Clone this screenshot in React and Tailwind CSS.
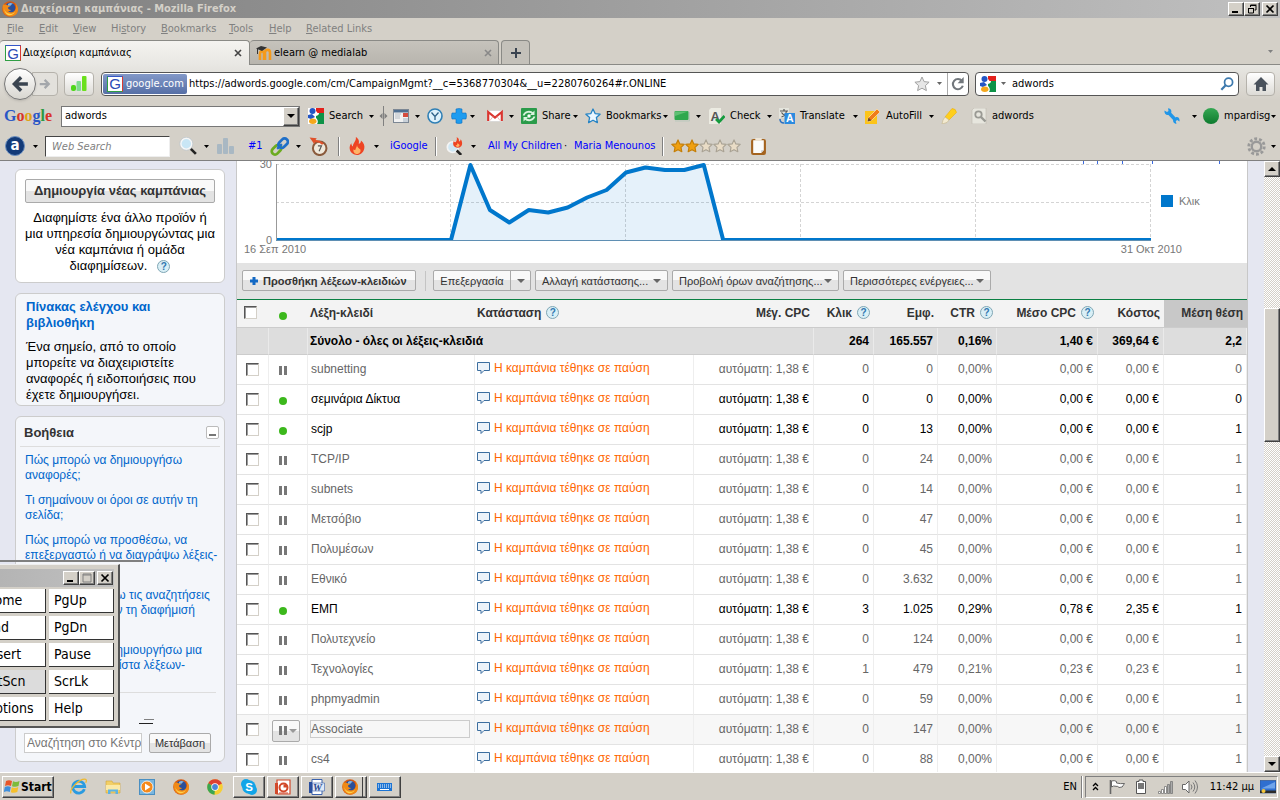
import React from "react";

const CLICKS = [
    0, 0, 0, 0, 0, 0, 0, 0, 0, 0, 30, 12, 7, 12, 11, 13, 17, 20, 27, 29, 28, 28, 30,
    0, 0, 0, 0, 0, 0, 0, 0, 0, 0, 0, 0, 0, 0, 0, 0, 0, 0, 0, 0, 0, 0, 0,
];

const ROWS = [
    { keyword: "subnetting", clicks: "0", impr: "0", ctr: "0,00%", cpc: "0,00 €", cost: "0,00 €", pos: "0" },
    { keyword: "σεμινάρια Δίκτυα", active: true, clicks: "0", impr: "0", ctr: "0,00%", cpc: "0,00 €", cost: "0,00 €", pos: "0" },
    { keyword: "scjp", active: true, clicks: "0", impr: "13", ctr: "0,00%", cpc: "0,00 €", cost: "0,00 €", pos: "1" },
    { keyword: "TCP/IP", clicks: "0", impr: "24", ctr: "0,00%", cpc: "0,00 €", cost: "0,00 €", pos: "1" },
    { keyword: "subnets", clicks: "0", impr: "14", ctr: "0,00%", cpc: "0,00 €", cost: "0,00 €", pos: "1" },
    { keyword: "Μετσόβιο", clicks: "0", impr: "47", ctr: "0,00%", cpc: "0,00 €", cost: "0,00 €", pos: "1" },
    { keyword: "Πολυμέσων", clicks: "0", impr: "45", ctr: "0,00%", cpc: "0,00 €", cost: "0,00 €", pos: "1" },
    { keyword: "Εθνικό", clicks: "0", impr: "3.632", ctr: "0,00%", cpc: "0,00 €", cost: "0,00 €", pos: "1" },
    { keyword: "ΕΜΠ", active: true, clicks: "3", impr: "1.025", ctr: "0,29%", cpc: "0,78 €", cost: "2,35 €", pos: "1" },
    { keyword: "Πολυτεχνείο", clicks: "0", impr: "124", ctr: "0,00%", cpc: "0,00 €", cost: "0,00 €", pos: "1" },
    { keyword: "Τεχνολογίες", clicks: "1", impr: "479", ctr: "0,21%", cpc: "0,23 €", cost: "0,23 €", pos: "1" },
    { keyword: "phpmyadmin", clicks: "0", impr: "59", ctr: "0,00%", cpc: "0,00 €", cost: "0,00 €", pos: "1" },
    { keyword: "Associate", hover: true, clicks: "0", impr: "147", ctr: "0,00%", cpc: "0,00 €", cost: "0,00 €", pos: "1" },
    { keyword: "cs4", clicks: "0", impr: "88", ctr: "0,00%", cpc: "0,00 €", cost: "0,00 €", pos: "1" },
];

const HELP_LINKS = [
    "Πώς μπορώ να δημιουργήσω αναφορές;",
    "Τι σημαίνουν οι όροι σε αυτήν τη σελίδα;",
    "Πώς μπορώ να προσθέσω, να επεξεργαστώ ή να διαγράψω λέξεις-κλειδιά;",
    "Πώς μπορώ να δω τις αναζητήσεις που ενεργοποιούν τη διαφήμισή μου;",
    "Πώς μπορώ να δημιουργήσω μια αποτελεσματική λίστα λέξεων-κλειδιά;",
];

const RAISED =
    "bg-[#d4d0c8] border border-t-white border-l-white border-r-[#404040] border-b-[#404040] shadow-[inset_-1px_-1px_0_#808080]";
const SUNKEN = "border border-t-[#808080] border-l-[#808080] border-r-white border-b-white";
const GBUTTON =
    "border border-[#aaa] rounded-xs bg-[linear-gradient(#f9f9f9_50%,#e3e3e3_50%)] text-[#333] whitespace-nowrap";

/* ---------- small pieces ---------- */

const Svg = ({ size = 16, className = "", children }) => (
    <svg width={size} height={size} viewBox="0 0 16 16" fill="none" className={`shrink-0 ${className}`} aria-hidden="true">
        {children}
    </svg>
);

const Caret = ({ className = "", color = "#000" }) => (
    <svg width="5" height="3" viewBox="0 0 5 3" className={`shrink-0 ${className}`} aria-hidden="true">
        <path d="M0 0h5L2.500 3z" fill={color} />
    </svg>
);

const BigCaret = ({ color = "#666", className = "" }) => (
    <svg width="8" height="4" viewBox="0 0 8 4" className={`shrink-0 ${className}`} aria-hidden="true">
        <path d="M0 0h8L4 4z" fill={color} />
    </svg>
);

const Divider = ({ className = "" }) => (
    <div className={`w-0.5 h-[19px] shrink-0 border-l border-[#808080] bg-white ${className}`} />
);

const Help = ({ className = "" }) => (
    <button
        aria-label="Βοήθεια"
        className={`inline-flex items-center justify-center size-[13px] rounded-full border border-[#7fa6b4] bg-[#d9eff6] text-[#3178b0] text-[10px] leading-none font-bold shrink-0 ${className}`}
    >
        ?
    </button>
);

const Check = ({ label }) => (
    <input
        type="checkbox"
        aria-label={label}
        className="block appearance-none size-[13px] bg-white border border-t-[#555] border-l-[#555] border-r-[#d4d0c8] border-b-[#d4d0c8] shadow-[inset_1px_1px_0_#999]"
    />
);

const Tool = ({ icon, label, caret, className = "" }) => (
    <button aria-label={label || "Εργαλείο"} className={`flex items-center h-6 shrink-0 whitespace-nowrap ${className}`}>
        {icon}
        {label && <span className="ml-[5px]">{label}</span>}
        {caret && <Caret className="ml-auto" />}
    </button>
);

/* ---------- icons ---------- */

const FirefoxIcon = ({ size = 16 }) => (
    <Svg size={size}>
        <circle cx="8" cy="8" r="7.800" fill="#d9580f" />
        <circle cx="8" cy="7" r="5.400" fill="#2b4f9a" />
        <path d="M6 3c2-1.500 4-1 5 0-1 0-2 .5-2 1.500L6 5z" fill="#7fb4e6" />
        <path d="M1 3.500C0 8 1 12 4 14s8 2 10.500-1S16.500 5 13 2c1.500 3 1.500 6-.5 8s-5 1.500-6.500 0c1.500.3 2.500-.3 3-1-2-.3-3-1-3-2.500L8.500 5C6.500 5 5.500 4.200 4 3.500 3 3.500 2 4 1 3.500z" fill="#f08a17" />
        <path d="M2 6c0 4 2.500 6.500 6 6.800 2 .2 4-.8 5-2.300-1 3-3.500 4-6 3.700S2 11 2 6z" fill="#ffd24a" />
    </Svg>
);

const GoogleG = () => (
    <span className="flex items-center justify-center size-4 shrink-0 bg-white border border-t-[#3456c8] border-l-[#2f9e44] border-r-[#d93a32] border-b-[#2f9e44] text-[#2a4bb5] text-[15px] leading-none font-['Liberation_Sans',sans-serif]">
        G
    </span>
);

const GoogleSquare = () => (
    <Svg>
        <path d="M0 0h16v16H0z" fill="#fff" />
        <path d="M8 0h8v5H9.500A4 4 0 0 0 8 3z" fill="#e3211c" />
        <path d="M8 8c2-.5 3-1.500 3-3h5v11H9c1-1 1.500-4-1-6z" fill="#0d9247" />
        <circle cx="4.500" cy="3" r="3" fill="#2456c4" />
        <path d="M0 7l4-1 3 3-4 2-3-1z" fill="#2456c4" />
        <ellipse cx="4.800" cy="13.300" rx="3.700" ry="2.700" fill="#f5a81c" />
    </Svg>
);

const MoodleIcon = () => (
    <Svg>
        <path d="M4 15V9c0-3.500 4-3.500 4 0v6M9 15V7.500c0-3.500 5-3.500 5 0V15" stroke="#f59a1b" strokeWidth="2.600" />
        <path d="M0 3.500L5 1l6 1.500-5 3.500z" fill="#333" />
        <path d="M1.500 4v5" stroke="#333" />
    </Svg>
);

const WindowIcon = () => (
    <Svg>
        <rect x=".5" y="1.500" width="15" height="13" fill="#f1f1f1" stroke="#7c8794" />
        <path d="M1 2h14v2.500H1z" fill="#4f6f92" />
        <path d="M2 6h6M2 8h5M2 10h5" stroke="#b5bcc4" />
        <path d="M10 5h5v4h-5z" fill="#d44b3e" />
        <path d="M10 10h5v4h-5z" fill="#c9d1d9" />
    </Svg>
);

const ClockIcon = () => (
    <Svg>
        <circle cx="8" cy="8" r="7" fill="#dff1fb" stroke="#2f7fb5" strokeWidth="1.600" />
        <path d="M4.500 4.500L8 8.500l3.500-4M8 8.500V12" stroke="#2c5f86" strokeWidth="1.300" />
    </Svg>
);

const PlusIcon = () => (
    <Svg>
        <path d="M5 1q3-1 6 0v4h4q1 3 0 6h-4v4q-3 1-6 0v-4H1q-1-3 0-6h4z" fill="#1e9cf0" stroke="#0f6fc0" strokeWidth=".6" />
    </Svg>
);

const GmailIcon = () => (
    <Svg>
        <rect y="2.500" width="16" height="11" rx="1" fill="#fff" stroke="#c9c9c9" strokeWidth=".5" />
        <path d="M1.200 13V4L8 9.500 14.800 4v9" stroke="#d93630" strokeWidth="2.200" />
        <path d="M3 12.500l3-4M13 12.500l-3-4" stroke="#e9a8a5" strokeWidth=".8" />
    </Svg>
);

const ShareIcon = () => (
    <Svg>
        <rect width="16" height="16" rx="1" fill="#2a9b4a" />
        <path d="M2.500 7.500C4 3.500 9 2.500 12 5.500M13.500 8.500c-1.500 4-6.500 5-9.500 2" stroke="#d9f3df" strokeWidth="1.800" />
        <path d="M13.500 2.500v4.500H9zM2.500 13.500V9H7z" fill="#d9f3df" />
        <circle cx="8" cy="8" r="1.700" fill="#fff" />
    </Svg>
);

const Star = ({ size = 16, fill = "#eaf6ff", stroke = "#2583c4", width = 1.3 }) => (
    <Svg size={size}>
        <path d="M8 1l2.100 4.600 5 .6-3.700 3.400 1 5L8 12.200l-4.400 2.400 1-5L.9 6.200l5-.6z" fill={fill} stroke={stroke} strokeWidth={width} strokeLinejoin="round" />
    </Svg>
);

const GreenBar = () => (
    <Svg>
        <rect x=".5" y="3" width="14" height="9" rx="1" fill="#2fa84e" />
        <path d="M1 3.500h13L1 8z" fill="#5fc074" />
        <path d="M1 13h14.500V4" stroke="#b9c7bb" />
    </Svg>
);

const SpellIcon = () => (
    <Svg>
        <path d="M0 2l2-2h10v16H0z" fill="#ecebe2" />
        <text x="1.500" y="12.500" fontSize="13" fontWeight="bold" fill="#555" fontFamily="Liberation Sans">A</text>
        <path d="M7 11l3 3 5.500-6" stroke="#149a3d" strokeWidth="2.600" />
    </Svg>
);

const TranslateIcon = () => (
    <Svg>
        <rect width="10" height="10" fill="#e4e4dc" />
        <path d="M1 3h8M5 1v2M2.500 9c3-1 4.500-3 5-6M2.500 4.500C4 7 6 8 8 8.500" stroke="#555" strokeWidth="1.200" />
        <rect x="5.500" y="5" width="10.500" height="11" fill="#2c8be0" />
        <text x="7" y="14.300" fontSize="10.500" fontWeight="bold" fill="#fff" fontFamily="Liberation Sans">A</text>
        <path d="M1 11c0 3 1.500 4 4 4" stroke="#2c6fc0" strokeWidth="1.500" />
    </Svg>
);

const AutoFillIcon = () => (
    <Svg>
        <path d="M0 3h12v13H0z" fill="#fcc419" />
        <path d="M2.500 13.500l1-4L12 1l3 3-8.500 8.500z" fill="#f07c1a" stroke="#fff3c9" strokeWidth=".6" />
        <path d="M2.500 13.500l1-4 3 3z" fill="#6b4c2a" />
    </Svg>
);

const MarkerIcon = () => (
    <Svg>
        <path d="M4 9l7-8.500q4 0 4.500 4L8 12z" fill="#ffcf1d" stroke="#e8a800" strokeWidth=".5" />
        <path d="M4 9l4 3-2 2.500L1 16l1-4z" fill="#f3ead0" stroke="#c4b58a" strokeWidth=".6" />
    </Svg>
);

const FindIcon = () => (
    <Svg>
        <path d="M1 2l2-2h12v16H1z" fill="#e7e6de" stroke="#bdbbb0" strokeWidth=".6" />
        <circle cx="7.500" cy="6.500" r="3.200" stroke="#9a9a94" strokeWidth="1.800" />
        <path d="M10 9l4.500 4.500" stroke="#9a9a94" strokeWidth="2.400" />
    </Svg>
);

const WrenchIcon = () => (
    <Svg>
        <path d="M4.500 4.500l7.500 8" stroke="#2196e8" strokeWidth="3.400" />
        <path d="M.5 2.500L3 4l1.500-1L4 .3C7 .5 8 3 7 5L4.500 7C2 7.500 0 5.500.5 2.500zM15.500 13.500L13.200 12l-1.500 1 .8 2.700c-3 0-4-2.500-3-4.500l2.500-2c2.500-.5 4 1.500 3.500 4.300z" fill="#2196e8" />
    </Svg>
);

const Magnifier = ({ size = 18 }) => (
    <Svg size={size}>
        <path d="M10.500 10.500l4.500 4.500" stroke="#222" strokeWidth="2.300" />
        <circle cx="6.500" cy="6" r="5" fill="#c9e6f5" stroke="#f7f7f7" strokeWidth="1.600" />
        <circle cx="6.500" cy="6" r="5.800" stroke="#b9c4cb" strokeWidth=".6" />
    </Svg>
);

const Flame = ({ size = 18 }) => (
    <Svg size={size}>
        <path d="M7 0c3 2 3 4 2.500 6 1.500-.3 2-1.500 2-3 2.500 2 3.500 4.500 3 7-.7 4-3.500 6-6.500 6s-6-2-6.500-5.500c-.3-2 .5-4 1.500-5 0 1.500.5 2.500 1.500 3C4 5.500 7.500 4 7 0z" fill="#ee4423" />
        <path d="M8 7c0 2 2 3 3 4 .7 2-.8 4-3 4s-3.800-2-3-4.200c.6.700 1 .7 1.500.7C6.500 10 8 9 8 7z" fill="#ffb366" />
    </Svg>
);

const ChainIcon = () => (
    <Svg size={19}>
        <rect x="1" y="8" width="9" height="5.500" rx="2.700" transform="rotate(-45 5.500 10.800)" stroke="#6cab1f" strokeWidth="2.300" />
        <rect x="6.500" y="2.500" width="9" height="5.500" rx="2.700" transform="rotate(-45 11 5.200)" stroke="#1e6fc9" strokeWidth="2.300" />
        <path d="M6 10l4-4" stroke="#1e6fc9" strokeWidth="2" />
    </Svg>
);

const Wayback = () => (
    <Svg size={19}>
        <circle cx="9" cy="9.500" r="5.700" fill="#efe9dc" stroke="#8a5a3c" strokeWidth="1.700" />
        <path d="M7.500 7.500h3L8.500 12" stroke="#555" />
        <path d="M.5.5l6 .5-1 1.500c3 0 5 1 7 3l-1.500 1C9 4.500 7 4 5 4.500L4.500 6z" fill="#e0512a" />
    </Svg>
);

const Gear = () => (
    <Svg size={19}>
        <circle cx="8" cy="8" r="6.500" stroke="#999" strokeWidth="2.400" strokeDasharray="2.400 1.680" />
        <circle cx="8" cy="8" r="4" fill="#d4d0c8" stroke="#999" strokeWidth="2" />
    </Svg>
);

const Clipboard = () => (
    <Svg size={17}>
        <rect x="1" y="1" width="14" height="15" rx="2" fill="#a4631f" />
        <path d="M3 2h10v9.500L10.500 14H3z" fill="#fbfbfb" />
        <path d="M13 11.500h-2.500V14z" fill="#c9c9c9" />
        <path d="M5 0h6v2.500H5z" fill="#eee6d8" />
    </Svg>
);

const FlameSearch = () => (
    <Svg size={18}>
        <circle cx="6" cy="9" r="4.800" fill="#cfe8f5" stroke="#f4f4f4" strokeWidth="1.500" />
        <path d="M9.500 12l4 4" stroke="#222" strokeWidth="2.200" />
        <path d="M9.500 0c2.500 1.500 2 3 2 4 1-.3 1.500-1 1.500-2 2.500 3 1.500 7.500-2.500 7.500S5.500 6 7 3.500c.3.800.8 1.200 1.300 1.200C9.500 4 10 2 9.500 0z" fill="#ee4423" />
        <path d="M10.300 5c.2 1 1.700 1.200 1.700 2.400 0 2-3.300 2-3.400 0C9.500 7.200 10.300 6.500 10.300 5z" fill="#ffb366" />
    </Svg>
);

const IeIcon = () => (
    <Svg size={17}>
        <path d="M13.500 10.500A5.600 5.600 0 1 1 13.800 8H4" stroke="#2a9be0" strokeWidth="2.600" />
        <path d="M1 14.500C-1 11 8 1 14 1c2 0 1.500 2 .8 3.500" stroke="#efb92d" strokeWidth="1.200" />
    </Svg>
);

const FolderIcon = () => (
    <Svg>
        <path d="M1 2h6l1 2h7v10H1z" fill="#f2cf66" stroke="#d1a53a" strokeWidth=".6" />
        <path d="M1 6h14v5H1z" fill="#fbe9a6" />
        <path d="M3 15v-4.500h10V15h-2.500v-2.500h-5V15z" fill="#5db3e3" />
    </Svg>
);

const PlayerIcon = () => (
    <Svg>
        <rect x=".5" y=".5" width="15" height="15" fill="#79b6df" stroke="#4a8fc2" />
        <circle cx="8" cy="8" r="6" fill="#f58a1c" stroke="#fff" strokeWidth=".8" />
        <path d="M6 4.500L11.500 8 6 11.500z" fill="#fff" />
    </Svg>
);

const ChromeIcon = () => (
    <Svg>
        <circle cx="8" cy="8" r="7.800" fill="#f6cf33" />
        <path d="M8 8L1.200 4.200A7.800 7.800 0 0 1 15 4.500z" fill="#dd4132" />
        <path d="M8 8L1.200 4.200A7.800 7.800 0 0 0 7.500 15.800z" fill="#3aa653" />
        <circle cx="8" cy="8" r="3.700" fill="#fff" />
        <circle cx="8" cy="8" r="2.900" fill="#4a86d8" />
    </Svg>
);

const SkypeIcon = () => (
    <Svg>
        <circle cx="5" cy="5" r="5" fill="#12a5e8" />
        <circle cx="11" cy="11" r="5" fill="#12a5e8" />
        <circle cx="8" cy="8" r="6.800" fill="#12a5e8" />
        <text x="4.200" y="12" fontSize="11.500" fontWeight="bold" fill="#fff" fontFamily="Liberation Sans">S</text>
    </Svg>
);

const PowerPointIcon = () => (
    <Svg>
        <path d="M2 1h13v14H2z" fill="#fff" stroke="#d2492a" strokeWidth="1.200" />
        <path d="M0 4h3v11H0z" fill="#d2492a" />
        <circle cx="8.500" cy="8.500" r="4" stroke="#d2492a" strokeWidth="2" />
        <path d="M8.500 8.500V5.500h3.500v3z" fill="#d2492a" />
        <path d="M4 14h9" stroke="#d2492a" />
    </Svg>
);

const WordIcon = () => (
    <Svg>
        <path d="M3 .5h10v15H3z" fill="#fff" stroke="#3b62ad" />
        <path d="M0 3h3v11H0z" fill="#2a4f9e" />
        <path d="M3.500 4h12v8h-12z" fill="#dfe8f7" stroke="#3b62ad" strokeWidth=".6" />
        <text x="4" y="11.500" fontSize="10" fontStyle="italic" fontWeight="bold" fill="#27488f" fontFamily="Liberation Serif">W</text>
    </Svg>
);

const KeyboardIcon = () => (
    <Svg>
        <rect x="0" y="4" width="15" height="8" fill="#1c74d4" />
        <path d="M1 6h13M1 8h13" stroke="#fff" strokeDasharray="1 1" />
        <path d="M3 10.500h9" stroke="#fff" />
    </Svg>
);

const WindowsFlag = () => (
    <Svg>
        <path d="M2 2q3-1.500 6 0L7 7Q4 5.500 1 7z" fill="#e8562a" />
        <path d="M9 2.300q3 1.300 6.500-.3L14.500 7q-3 1.500-6.500.2z" fill="#7dbb3b" />
        <path d="M.8 8q3-1.500 6 0l-1 5q-3-1.500-6 0z" fill="#3f8fdc" />
        <path d="M7.800 8.300q3 1.300 6.500-.3l-1 5q-3 1.500-6.500.3z" fill="#f6c02c" />
    </Svg>
);

const Bubble = () => (
    <svg width="13" height="12" viewBox="0 0 13 12" className="shrink-0" aria-hidden="true">
        <path d="M.5.500h12v8H7l-3 3V8.500H.5z" fill="#edf3f9" stroke="#3c6e9f" />
    </svg>
);

const Pause = () => (
    <svg width="8" height="9" viewBox="0 0 8 9" className="shrink-0" aria-hidden="true">
        <path d="M0 0h3v9H0zM5 0h3v9H5z" fill="#777" />
    </svg>
);

const Dot = () => <span className="block size-2 rounded-full bg-[#3cb81c]" />;

const WinGlyph = ({ kind }) => (
    <svg width="10" height="10" viewBox="0 0 10 10" aria-hidden="true">
        {kind === "min" && <path d="M1 8h6" stroke="#000" strokeWidth="2" />}
        {kind === "max" && <path d="M1 1h8v8H1zM1 2h8" stroke="#808080" fill="none" />}
        {kind === "restore" && <path d="M3.500 1h6M3.500 1.500V3M3 1.500h6V6H7.500M1 4.500h6M1.500 4v5h5V4" stroke="#000" fill="none" />}
        {kind === "close" && <path d="M1.500 1.500l7 7M8.500 1.500l-7 7" stroke="#000" strokeWidth="1.700" />}
    </svg>
);

const WinButton = ({ kind, label, className = "" }) => (
    <button aria-label={label} className={`flex items-center justify-center w-4 h-3.5 ${RAISED} ${className}`}>
        <WinGlyph kind={kind} />
    </button>
);

/* ---------- browser chrome ---------- */

const TitleBar = () => (
    <div className="flex items-center h-[18px] shrink-0 pl-0.5 pr-0.5 bg-linear-to-r from-[#808080] to-[#c0c0c0] text-[#d4d0c8] font-bold">
        <FirefoxIcon />
        <span className="ml-[3px] whitespace-nowrap">Διαχείριση καμπάνιας - Mozilla Firefox</span>
        <WinButton kind="min" label="Ελαχιστοποίηση" className="ml-auto" />
        <WinButton kind="restore" label="Επαναφορά" />
        <WinButton kind="close" label="Κλείσιμο" className="ml-0.5" />
    </div>
);

const MENU = [
    ["F", "ile", "w-8"],
    ["E", "dit", "w-[34px]"],
    ["V", "iew", "w-[38px]"],
    ["Hi", "s", "w-[50px]", "tory"],
    ["B", "ookmarks", "w-[68px]"],
    ["T", "ools", "w-10"],
    ["H", "elp", "w-[37px]"],
    ["R", "elated Links", "w-20"],
];

const MenuBar = () => (
    <div className="flex items-center h-[22px] shrink-0 pl-[7px] text-[#808080]">
        {MENU.map(([a, b, width, rest]) => (
            <button key={a + b} className={`text-left whitespace-nowrap shrink-0 ${width}`}>
                {rest ? (
                    <>
                        {a}<u>{b}</u>{rest}
                    </>
                ) : (
                    <>
                        <u>{a}</u>{b}
                    </>
                )}
            </button>
        ))}
    </div>
);

const CloseGlyph = ({ color }) => (
    <svg width="8" height="8" viewBox="0 0 8 8" aria-hidden="true">
        <path d="M1 1l6 6M7 1L1 7" stroke={color} strokeWidth="1.600" />
    </svg>
);

const Tabs = () => (
    <div className="flex items-end h-[25px] shrink-0 border-b border-[#8a8a86]">
        <div className="flex items-center gap-0.5 w-[250px] h-[25px] -mb-px pl-[5px] pr-[7px] shrink-0 rounded-t-sm border-t border-r border-[#8a8a86] bg-linear-to-b from-[#f4f3f0] to-[#e8e7e3]">
            <GoogleG />
            <span>Διαχείριση καμπάνιας</span>
            <button aria-label="Κλείσιμο καρτέλας" className="ml-auto"><CloseGlyph color="#444" /></button>
        </div>
        <div className="flex items-center gap-0.5 w-[249px] h-6 pl-[6px] pr-1.5 shrink-0 rounded-t-sm border-t border-r border-[#8a8a86] bg-linear-to-b from-[#c6c3bc] to-[#b8b5ae]">
            <MoodleIcon />
            <span>elearn @ medialab</span>
            <button aria-label="Κλείσιμο καρτέλας" className="ml-auto"><CloseGlyph color="#888" /></button>
        </div>
        <button aria-label="Νέα καρτέλα" className="flex items-center justify-center ml-0.5 w-[29px] h-6 shrink-0 rounded-t-sm border border-b-0 border-[#8a8a86] bg-[#c4c1ba]">
            <svg width="10" height="10" viewBox="0 0 10 10" aria-hidden="true">
                <path d="M5 0v10M0 5h10" stroke="#3a4450" strokeWidth="2" />
            </svg>
        </button>
        <Caret color="#808080" className="ml-auto mr-[7px] mb-[11px]" />
    </div>
);

const NavBar = () => (
    <div className="flex items-center h-[35px] shrink-0 pl-1 pr-[5px] pt-0.5 bg-linear-to-b from-[#e8e7e3] to-[#d4d0c8]">
        <button aria-label="Πίσω" className="flex items-center justify-center size-8 shrink-0 rounded-full border border-[#777] bg-linear-to-b from-white to-[#d8d6d0] shadow-sm z-10">
            <Svg size={18}>
                <path d="M9 2L3 8l6 6M3.500 8H15" stroke="#3a4450" strokeWidth="3" />
            </Svg>
        </button>
        <button aria-label="Εμπρός" className="flex items-center justify-end w-[26px] h-6 -ml-1 pr-1.5 shrink-0 rounded-r border border-[#b5b2ab] bg-[#e3e1dc]">
            <Svg size={12}>
                <path d="M7.500 2.500L13 8l-5.500 5.500M12.500 8H1" stroke="#a4a7ab" strokeWidth="3" />
            </Svg>
        </button>
        <button aria-label="Alexa" className="flex items-center justify-center w-[30px] h-6 ml-1.5 shrink-0 rounded border border-[#b5b2ab] bg-linear-to-b from-white to-[#dddbd6]">
            <Svg>
                <rect x="0" y="9" width="5" height="6" rx="2" fill="#4fd61a" />
                <rect x="5.500" y="5" width="4.500" height="10" rx="1" fill="#7fdc8f" />
                <rect x="11" y="0" width="4.500" height="15" rx="1" fill="#6be01c" />
            </Svg>
        </button>
        <div className="flex items-center flex-1 min-w-0 h-6 ml-[7px] rounded border border-[#555] bg-white">
            <div className="flex items-center gap-[3px] w-[84px] h-5 ml-px pl-1 shrink-0 rounded-xs bg-linear-to-b from-[#8298c8] to-[#566fa6] text-white">
                <GoogleG />
                <span>google.com</span>
            </div>
            <input
                aria-label="Διεύθυνση"
                defaultValue="https://adwords.google.com/cm/CampaignMgmt?__c=5368770304&__u=2280760264#r.ONLINE"
                className="flex-1 min-w-0 ml-0.5 bg-transparent outline-none"
            />
            <Star fill="#e6e6e6" stroke="#a2a2a2" width={1} />
            <Caret color="#666" className="ml-[7px]" />
            <button aria-label="Ανανέωση" className="flex items-center justify-center w-[21px] h-[22px] ml-[5px] border-l border-[#aaa]">
                <Svg size={14}>
                    <path d="M12.500 4.500A5.800 5.800 0 1 0 13.500 10" stroke="#72777c" strokeWidth="2.400" />
                    <path d="M14.500 0v7h-7z" fill="#72777c" />
                </Svg>
            </button>
        </div>
        <div className="flex items-center w-[264px] h-6 ml-1.5 pl-1 pr-1 shrink-0 rounded border border-[#555] bg-white">
            <GoogleSquare />
            <Caret color="#666" className="ml-[5px]" />
            <input aria-label="Αναζήτηση Google" defaultValue="adwords" className="flex-1 min-w-0 ml-1.5 bg-transparent outline-none" />
            <Svg size={14}>
                <path d="M1.500 14.500l5-5" stroke="#3d79ad" strokeWidth="2.600" />
                <circle cx="9.800" cy="6" r="4.600" stroke="#3d79ad" strokeWidth="2" />
            </Svg>
        </div>
        <button aria-label="Αρχική σελίδα" className="flex items-center justify-center w-[29px] h-6 ml-[7px] shrink-0 rounded border border-[#b5b2ab] bg-linear-to-b from-white to-[#dddbd6]">
            <Svg>
                <path d="M8 1l7.500 7.500H13V15H9.500v-4h-3v4H3V8.500H.5z" fill="#4a525c" />
            </Svg>
        </button>
    </div>
);

const GoogleToolbar = () => (
    <div className="flex items-center h-8 shrink-0 pr-1">
        <div className="w-[61px] pl-1 shrink-0 font-['Liberation_Serif',serif] text-[16px] leading-5 font-bold">
            <span className="text-[#2a56c6]">G</span>
            <span className="text-[#d8332a]">o</span>
            <span className="text-[#e0a214]">o</span>
            <span className="text-[#2a56c6]">g</span>
            <span className="text-[#2c9a41]">l</span>
            <span className="text-[#d8332a]">e</span>
        </div>
        <div className="flex w-[239px] h-[21px] shrink-0 bg-white border border-[#777]">
            <input aria-label="Όρος αναζήτησης" defaultValue="adwords" className="flex-1 min-w-0 pl-[3px] outline-none" />
            <button aria-label="Ιστορικό" className={`flex items-center justify-center w-4 ${RAISED}`}>
                <BigCaret color="#000" />
            </button>
        </div>
        <Tool icon={<GoogleSquare />} label="Search" caret className="ml-2 w-[66px]" />
        <svg width="9" height="20" viewBox="0 0 9 20" className="ml-[5px] shrink-0" aria-hidden="true">
            <path d="M4.500 0v20" stroke="#808080" />
            <path d="M3.500 7v6l-3-3zM5.500 7v6l3-3z" fill="#808080" />
        </svg>
        <Tool icon={<WindowIcon />} caret className="ml-[5px] w-[27px]" />
        <Tool icon={<ClockIcon />} className="ml-[7px] w-4" />
        <Tool icon={<PlusIcon />} caret className="ml-2 w-6" />
        <Tool icon={<GmailIcon />} caret className="ml-3 w-[27px]" />
        <Tool icon={<ShareIcon />} label="Share" caret className="ml-[7px] w-[57px]" />
        <Tool icon={<Star />} label="Bookmarks" caret className="ml-[7px] w-[83px]" />
        <Tool icon={<GreenBar />} caret className="ml-1.5 w-[27px]" />
        <Tool icon={<SpellIcon />} label="Check" caret className="ml-2 w-[63px]" />
        <Tool icon={<TranslateIcon />} label="Translate" caret className="ml-[7px] w-[79px]" />
        <Tool icon={<AutoFillIcon />} label="AutoFill" caret className="ml-[7px] w-[69px]" />
        <Tool icon={<MarkerIcon />} className="ml-[7px] w-4" />
        <Tool icon={<FindIcon />} label="adwords" className="ml-3.5" />
        <Tool icon={<WrenchIcon />} caret className="ml-auto w-[33px]" />
        <Tool
            icon={<span className="size-4 shrink-0 rounded-full bg-linear-to-b from-[#35a853] to-[#0b7a2e]" />}
            label="mpardisg"
            caret
            className="ml-1.5 w-[73px]"
        />
    </div>
);

const AlexaToolbar = () => (
    <div className="flex items-center h-7 shrink-0 pl-[5px] pr-1">
        <span className="flex items-center justify-center size-5 shrink-0 rounded-full bg-[#123a78] border border-[#6b8fc0] text-white font-bold text-[15px] leading-none pb-0.5">a</span>
        <Caret className="ml-2" />
        <input
            aria-label="Web Search"
            placeholder="Web Search"
            className="w-[125px] h-[21px] ml-[7px] pl-1.5 shrink-0 bg-white italic placeholder:text-[#808080] border border-t-[#444] border-l-[#444] border-r-[#eee] border-b-[#eee] outline-none"
        />
        <Tool icon={<Magnifier />} caret className="ml-[9px] w-[30px]" />
        <svg width="18" height="17" viewBox="0 0 18 17" className="ml-2 shrink-0" aria-hidden="true">
            <rect x="0" y="6" width="5" height="10" rx="1" fill="#a9b8c3" />
            <rect x="6" y="0" width="5" height="16" rx="1" fill="#a9b8c3" />
            <rect x="12" y="8" width="5" height="8" rx="1" fill="#a9b8c3" />
        </svg>
        <a href="#rank" className="ml-[13px] w-[22px] shrink-0 text-[#00f]">#1</a>
        <Tool icon={<ChainIcon />} caret className="w-[31px]" />
        <Tool icon={<Wayback />} className="ml-2 w-5" />
        <Divider className="ml-[9px]" />
        <Tool icon={<Flame />} caret className="ml-2 w-[31px]" />
        <a href="#igoogle" className="ml-[11px] w-[45px] shrink-0 text-[#00f]">iGoogle</a>
        <Divider />
        <Tool icon={<FlameSearch />} caret className="ml-[9px] w-[30px]" />
        <a href="#children" className="ml-3 w-[75px] shrink-0 whitespace-nowrap text-[#00f]">All My Children</a>
        <span className="w-[11px] shrink-0 pl-px">·</span>
        <a href="#menounos" className="w-[88px] shrink-0 whitespace-nowrap text-[#00f]">Maria Menounos</a>
        <Divider />
        <div className="flex ml-[7px] shrink-0">
            <Star size={14} fill="#f0a010" stroke="#c47e08" />
            <Star size={14} fill="#f0a010" stroke="#c47e08" />
            <Star size={14} fill="#e9dcc6" stroke="#a9a294" />
            <Star size={14} fill="#e9dcc6" stroke="#a9a294" />
            <Star size={14} fill="#e9dcc6" stroke="#a9a294" />
        </div>
        <Tool icon={<Clipboard />} className="ml-[9px]" />
        <Tool icon={<Gear />} caret className="ml-auto w-[29px]" />
    </div>
);

/* ---------- page ---------- */

const Sidebar = () => (
    <aside className="w-[236px] shrink-0 pl-[15px] pr-[11px] pt-2 text-[13px] leading-4">
        <section className="rounded-md border border-[#ccc] bg-white px-[9px] pt-[9px] pb-2 text-center">
            <button className={`w-full h-6 text-[13px] font-bold ${GBUTTON}`}>Δημιουργία νέας καμπάνιας</button>
            <p className="mt-[7px]">
                Διαφημίστε ένα άλλο προϊόν ή μια υπηρεσία δημιουργώντας μια νέα καμπάνια ή ομάδα διαφημίσεων.
                <Help className="ml-2.5 align-middle" />
            </p>
        </section>

        <section className="mt-2.5 rounded-md border border-[#ccc] bg-[#f4f6fa] pl-2.5 pr-5 pt-[5px] pb-0.5">
            <a href="#library" className="block font-bold text-[#06c]">Πίνακας ελέγχου και βιβλιοθήκη</a>
            <p className="mt-2">Ένα σημείο, από το οποίο μπορείτε να διαχειριστείτε αναφορές ή ειδοποιήσεις που έχετε δημιουργήσει.</p>
        </section>

        <section className="mt-2.5 rounded-md border border-[#ccc] bg-[#f4f6fa] px-2 pb-2 text-[12px] leading-[15px]">
            <div className="flex items-center justify-between h-[30px] -mx-1 pl-1 pt-0.5 border-b border-[#ddd]">
                <h2 className="text-[13px] font-bold text-[#333]">Βοήθεια</h2>
                <button aria-label="Σύμπτυξη" className="flex items-center justify-center size-[13px] mr-px rounded-xs border border-[#bbb] bg-white">
                    <span className="w-[7px] h-0.5 mt-1 bg-[#777]" />
                </button>
            </div>
            <ul className="mt-1.5 -mr-1 pl-px space-y-2.5 text-[#06c]">
                {HELP_LINKS.map((text) => (
                    <li key={text}>
                        <a href="#help">{text}</a>
                    </li>
                ))}
            </ul>
            <div className="mt-1 border-t border-[#ddd]" />
            <form className="flex mt-10" onSubmit={(e) => e.preventDefault()}>
                <input
                    aria-label="Αναζήτηση στο Κέντρο Βοήθειας"
                    placeholder="Αναζήτηση στο Κέντρο Βοήθειας"
                    className="w-[118px] h-5 pl-0.5 text-[12px] bg-white border border-[#ccc] placeholder:text-[#777] outline-none"
                />
                <button className={`w-[62px] h-5 ml-[7px] text-[11px] ${GBUTTON}`}>Μετάβαση</button>
            </form>
        </section>
    </aside>
);

const Chart = () => {
    const step = 875 / (CLICKS.length - 1);
    const line = CLICKS.map((v, i) => `${(i * step).toFixed(1)},${76 - v * 2.5}`).join(" ");

    return (
        <div className="relative h-[102px] shrink-0 overflow-hidden bg-white text-[11px] leading-3 text-[#777]">
            <div className="flex h-20">
                <div className="flex flex-col justify-between w-[39px] h-[88px] -mt-[3px] pr-1 text-right">
                    <span>30</span>
                    <span>0</span>
                </div>
                <svg viewBox="0 0 875 80" preserveAspectRatio="none" className="flex-1 min-w-0 h-20" aria-label="Κλικ ανά ημέρα">
                    <g stroke="#d4d4d4" strokeDasharray="3 2">
                        <path d="M0 3.500h875M0 41.500h875" vectorEffect="non-scaling-stroke" />
                        <path d="M174.500 3v76M349.500 3v76M524.500 3v76M699.500 3v76M874.500 3v76" vectorEffect="non-scaling-stroke" />
                    </g>
                    <g transform="translate(0 3)">
                        <polygon points={`0,76 ${line} 875,76`} fill="#0077cc" fillOpacity=".1" />
                        <polyline points={line} fill="none" stroke="#0077cc" strokeWidth="4" strokeLinejoin="round" vectorEffect="non-scaling-stroke" />
                    </g>
                    <path d="M.5 3v77" stroke="#999" />
                    <path d="M0 79.500h875" stroke="#5f8fb3" />
                </svg>
                <div className="flex items-center gap-1.5 w-24 pl-2.5">
                    <span className="size-3 bg-[#0077cc]" />
                    <span>Κλικ</span>
                </div>
            </div>
            <div className="flex justify-between pl-[7px] pr-[65px] pt-0.5">
                <span>16 Σεπ 2010</span>
                <span>31 Οκτ 2010</span>
            </div>
            <svg width="164" height="3" viewBox="0 0 164 3" className="absolute right-0 top-0" aria-hidden="true">
                <path d="M.5 0v3M14.500 0v3M39.500 0v3M69.500 0v3M136.500 0v3" stroke="#3c6be0" />
            </svg>
        </div>
    );
};

const ActionButton = ({ label, className = "" }) => (
    <button className={`flex items-center justify-between h-[21px] pl-1.5 pr-1.5 shrink-0 ${GBUTTON} ${className}`}>
        <span>{label}</span>
        <BigCaret />
    </button>
);

const Actions = () => (
    <div className="flex items-center h-[37px] shrink-0 pl-[5px] pb-px overflow-hidden bg-[#e3e3e3] border-b border-[#0b8043] text-[11px]">
        <button className={`flex items-center gap-1 w-[174px] h-[21px] pl-1.5 shrink-0 font-bold ${GBUTTON}`}>
            <svg width="10" height="10" viewBox="0 0 10 10" aria-hidden="true">
                <path d="M5 1v8M1 5h8" stroke="#1369c4" strokeWidth="3" />
            </svg>
            Προσθήκη λέξεων-κλειδιών
        </button>
        <div className="w-px h-5 ml-[9px] mr-[7px] bg-[#c4c4c4]" />
        <div className={`flex w-[98px] h-[21px] shrink-0 ${GBUTTON}`}>
            <button className="flex-1">Επεξεργασία</button>
            <button aria-label="Επιλογές επεξεργασίας" className="flex items-center justify-center w-5 border-l border-[#aaa]">
                <BigCaret />
            </button>
        </div>
        <ActionButton label="Αλλαγή κατάστασης..." className="ml-1 w-[133px]" />
        <ActionButton label="Προβολή όρων αναζήτησης..." className="ml-1 w-[167px]" />
        <ActionButton label="Περισσότερες ενέργειες..." className="ml-1 w-[148px]" />
    </div>
);

const HEAD = "h-7 pr-1 pb-0.5 border-b border-[#ccc] text-right font-bold whitespace-nowrap";
const SUM = "h-[27px] pr-1 pb-px border-b border-[#ccc] border-r border-r-[#eaeaea] text-right font-bold whitespace-nowrap";
const CELL = "h-[30px] pr-1 pb-0.5 border-b border-[#e3e3e3] border-r border-r-[#eee] text-right whitespace-nowrap";

const KeywordTable = () => (
    <table className="w-full table-fixed border-separate border-spacing-0 text-[12px] leading-4">
        <colgroup>
            <col className="w-8" />
            <col className="w-[39px]" />
            <col className="w-[167px]" />
            <col />
            <col className="w-[120px]" />
            <col className="w-[60px]" />
            <col className="w-16" />
            <col className="w-[59px]" />
            <col className="w-[101px]" />
            <col className="w-[66px]" />
            <col className="w-[83px]" />
        </colgroup>
        <thead className="bg-[#f3f3f3] text-[#333]">
            <tr>
                <th className="h-7 pl-[7px] pb-0.5 border-b border-[#ccc]"><Check label="Επιλογή όλων" /></th>
                <th className="h-7 pl-2.5 pt-1 border-b border-[#ccc]"><Dot /></th>
                <th className="h-7 pl-0.5 pb-0.5 border-b border-[#ccc] text-left">Λέξη-κλειδί</th>
                <th className="h-7 pl-0.5 pb-0.5 border-b border-[#ccc] text-left">
                    <span className="flex items-center gap-[5px]">Κατάσταση <Help /></span>
                </th>
                <th className={HEAD}>Μέγ. CPC</th>
                <th className={HEAD}><span className="flex items-center justify-end gap-[5px]">Κλικ <Help /></span></th>
                <th className={HEAD}>Εμφ.</th>
                <th className={HEAD}><span className="flex items-center justify-end gap-[5px]">CTR <Help /></span></th>
                <th className={HEAD}><span className="flex items-center justify-end gap-[5px]">Μέσο CPC <Help /></span></th>
                <th className={HEAD}>Κόστος</th>
                <th className={`bg-[#c8c8c8] ${HEAD}`}>Μέση θέση</th>
            </tr>
        </thead>
        <tbody>
            <tr className="bg-[#ddd]">
                <td className={SUM} />
                <td className={SUM} />
                <td colSpan={3} className="h-[27px] pl-0.5 pb-px border-b border-[#ccc] border-r border-r-[#eaeaea] font-bold">
                    Σύνολο - όλες οι λέξεις-κλειδιά
                </td>
                <td className={SUM}>264</td>
                <td className={SUM}>165.557</td>
                <td className={SUM}>0,16%</td>
                <td className={SUM}>1,40 €</td>
                <td className={SUM}>369,64 €</td>
                <td className={SUM}>2,2</td>
            </tr>
            {ROWS.map((row) => (
                <tr key={row.keyword} className={`${row.hover ? "bg-[#f7f7f7]" : "bg-white"} ${row.active ? "text-black" : "text-[#666]"}`}>
                    <td className="h-[30px] pl-[9px] border-b border-[#e3e3e3] border-r border-r-[#eee]">
                        <Check label={row.keyword} />
                    </td>
                    <td className={`h-[30px] border-b border-[#e3e3e3] border-r border-r-[#eee] ${row.hover ? "pl-[3px] pt-0.5" : "pl-2.5 pt-0.5"}`}>
                        {row.hover ? (
                            <button aria-label="Αλλαγή κατάστασης" className={`flex items-center gap-0.5 w-7 h-[22px] pl-1.5 ${GBUTTON}`}>
                                <Pause />
                                <BigCaret color="#999" />
                            </button>
                        ) : row.active ? (
                            <Dot />
                        ) : (
                            <Pause />
                        )}
                    </td>
                    <td className="h-[30px] pl-0.5 pr-1 pb-px border-b border-[#e3e3e3] border-r border-r-[#eee]">
                        <span className={`block border ${row.hover ? "border-[#ccc]" : "border-transparent"}`}>{row.keyword}</span>
                    </td>
                    <td className="h-[30px] pl-0.5 pb-1 border-b border-[#e3e3e3] border-r border-r-[#eee] text-[#ff6600]">
                        <span className="flex items-center gap-1 whitespace-nowrap">
                            <Bubble />
                            Η καμπάνια τέθηκε σε παύση
                        </span>
                    </td>
                    <td className={CELL}>αυτόματη: 1,38 €</td>
                    <td className={CELL}>{row.clicks}</td>
                    <td className={CELL}>{row.impr}</td>
                    <td className={CELL}>{row.ctr}</td>
                    <td className={CELL}>{row.cpc}</td>
                    <td className={CELL}>{row.cost}</td>
                    <td className={CELL}>{row.pos}</td>
                </tr>
            ))}
        </tbody>
    </table>
);

const Scrollbar = () => (
    <div className="flex flex-col w-4 shrink-0 bg-[repeating-conic-gradient(#fff_0_25%,#d4d0c8_0_50%)] bg-[length:2px_2px]">
        <button aria-label="Πάνω" className={`flex items-center justify-center h-4 ${RAISED}`}>
            <BigCaret color="#000" className="rotate-180" />
        </button>
        <div className="basis-[131px]" />
        <div className={`h-[134px] ${RAISED}`} />
        <button aria-label="Κάτω" className={`flex items-center justify-center h-4 mt-auto ${RAISED}`}>
            <BigCaret color="#000" />
        </button>
    </div>
);

/* ---------- floating keyboard ---------- */

const KEYS = [
    ["Home", "PgUp"],
    ["End", "PgDn"],
    ["Insert", "Pause"],
    ["PrtScn", "ScrLk"],
    ["Options", "Help"],
];

const KEY = "h-6 pl-[5px] pb-0.5 text-left whitespace-nowrap border-r border-b border-[#333]";

const OnScreenKeyboard = () => (
    <div className="absolute left-0 bottom-[72px] w-[120px] overflow-hidden bg-[#d4d0c8] border-t border-t-[#eee] border-r-2 border-b-2 border-r-[#555] border-b-[#555] text-[14px] leading-5 text-black">
        <div className="flex items-center justify-end h-[18px] mt-1 mr-1 pr-px bg-linear-to-r from-[#b4b4b4] to-[#c0c0c0]">
            <WinButton kind="min" label="Ελαχιστοποίηση" />
            <WinButton kind="max" label="Μεγιστοποίηση" />
            <WinButton kind="close" label="Κλείσιμο" className="ml-0.5" />
        </div>
        <div className="flex flex-col items-end gap-[3px] pt-0.5 pr-1 pb-[5px]">
            {KEYS.map(([left, right]) => (
                <div key={left} className="flex gap-[3px]">
                    <button className={`w-[66px] ${KEY} ${left === "PrtScn" ? "bg-[#dcdcdc]" : "bg-white"}`}>{left}</button>
                    <button className={`w-[65px] bg-white ${KEY}`}>{right}</button>
                </div>
            ))}
        </div>
    </div>
);

/* ---------- taskbar ---------- */

const TaskButton = ({ label, children }) => (
    <button aria-label={label} className={`flex items-center justify-center w-8 h-[22px] mr-0.5 shrink-0 ${RAISED}`}>
        {children}
    </button>
);

const Taskbar = () => (
    <div className="flex items-center h-7 shrink-0 pl-0.5 pr-0.5 border-t border-white bg-[#d4d0c8]">
        <button className={`flex items-center gap-px w-[52px] h-[22px] pl-px shrink-0 font-bold text-[12px] ${RAISED}`}>
            <WindowsFlag />
            Start
        </button>
        <div className="flex items-center gap-[18px] ml-4 mr-[10px]">
            <IeIcon />
            <FolderIcon />
            <PlayerIcon />
            <FirefoxIcon />
            <ChromeIcon />
        </div>
        <TaskButton label="Skype"><SkypeIcon /></TaskButton>
        <TaskButton label="PowerPoint"><PowerPointIcon /></TaskButton>
        <TaskButton label="Word"><WordIcon /></TaskButton>
        <button aria-label="Firefox" className={`flex items-center w-8 h-[22px] mr-0.5 pl-1.5 shrink-0 ${RAISED}`}>
            <FirefoxIcon />
            <span className="w-px h-5 ml-1 bg-[#404040]" />
        </button>
        <TaskButton label="Πληκτρολόγιο"><KeyboardIcon /></TaskButton>
        <span className="ml-auto">EN</span>
        <Divider className="h-[22px] ml-1" />
        <div className={`flex items-center w-[193px] h-[22px] ml-0.5 pl-1.5 shrink-0 ${SUNKEN}`}>
            <svg width="7" height="9" viewBox="0 0 7 9" aria-hidden="true">
                <path d="M1 4l2.500-2.500L6 4M1 8l2.500-2.500L6 8" stroke="#000" strokeWidth="1.300" fill="none" />
            </svg>
            <Svg className="ml-2.5">
                <path d="M1.500 1v14" stroke="#666" strokeWidth="1.600" />
                <path d="M2.500 2q3-1 5 .5v1.500q4 1 8 .5-2 5-5.500 4-1-1.500-3-1.200-2.500-1-4.500.7z" fill="#fff" stroke="#666" />
            </Svg>
            <Svg className="ml-2">
                <path d="M6 1h4v1.500h2.500v12h-9v-12H6z" fill="#fff" stroke="#555" />
                <path d="M5 4h6v6H5z" fill="#777" />
            </Svg>
            <Svg className="ml-[9px]">
                <path d="M.5 12.500h2v2h-2zM3.500 10.500h2v4h-2zM6.500 7.500h2v7h-2z" fill="#fff" stroke="#777" strokeWidth=".8" />
                <path d="M9.500 5.500h2v9h-2zM12.500 2.500h2v12h-2z" fill="#aaa" stroke="#777" strokeWidth=".8" />
            </Svg>
            <Svg className="ml-2">
                <path d="M.5 5.500h3L7 2v12l-3.500-3.500h-3z" fill="#fff" stroke="#666" />
                <path d="M9 5.500q2 2.500 0 5M11 3.500q3.500 4.500 0 9M13 1.500q5 6.500 0 13" stroke="#777" />
            </Svg>
            <span className="ml-auto mr-1.5 whitespace-nowrap">11:42 μμ</span>
            <Svg className="mr-px">
                <rect x="0" y="1.500" width="16" height="12.500" fill="#2f6fd0" stroke="#234a86" strokeWidth=".6" />
                <path d="M1 9.500L15 3v6.500z" fill="#6fa5ec" />
                <path d="M0 11.500h16V14H0z" fill="#2b2b2b" />
                <circle cx="3.500" cy="12" r="2" fill="#f3c53a" />
            </Svg>
        </div>
    </div>
);

const App = () => {
    return (
        <div className="relative flex flex-col h-screen overflow-hidden bg-[#d4d0c8] text-black text-[11px] leading-4 font-['DejaVu_Sans_Condensed','Noto_Sans',sans-serif]">
            <TitleBar />
            <MenuBar />
            <Tabs />
            <NavBar />
            <GoogleToolbar />
            <AlexaToolbar />

            <main className="flex flex-1 min-h-0 border-t border-[#808080] bg-[#e5e7f1] font-['Liberation_Sans',sans-serif]">
                <div className="flex flex-1 min-w-0 overflow-hidden">
                    <Sidebar />
                    <div className="flex flex-col flex-1 min-w-0 mr-4 border-x border-[#c8c8c8] bg-white">
                        <Chart />
                        <Actions />
                        <KeywordTable />
                    </div>
                </div>
                <Scrollbar />
            </main>

            <Taskbar />

            <div className="absolute left-0 bottom-[238px] w-[143px] h-0.5 bg-[#808080]" />
            <svg width="16" height="6" viewBox="0 0 16 6" className="absolute left-[139px] bottom-[76px]" aria-hidden="true">
                <path d="M5 1.500h10" stroke="#808080" />
                <path d="M0 5.500h14" stroke="#222" />
            </svg>
            <OnScreenKeyboard />
        </div>
    );
};

export default App;
